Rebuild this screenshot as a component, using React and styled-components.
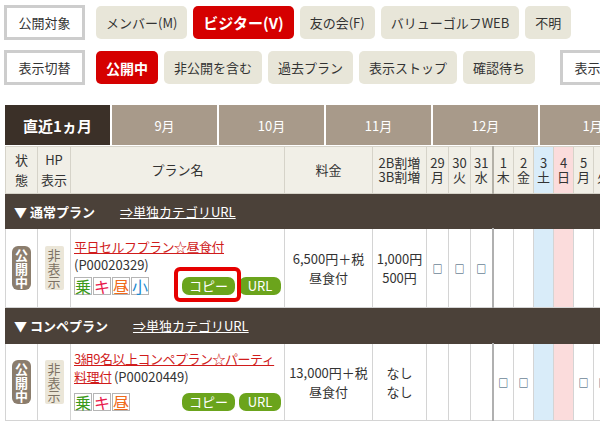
import React from 'react';
import styled, { createGlobalStyle } from 'styled-components';

const GlobalStyle = createGlobalStyle`
  html, body { margin: 0; padding: 0; overflow: hidden; background: #fff; }
  body {
    font-family: "Noto Sans CJK JP", "Noto Sans", sans-serif;
    color: #333;
    font-size: 13px;
  }
  * { box-sizing: border-box; }
`;

const Page = styled.div`
  width: 900px;
  padding: 5px 0 0 4px;
`;

const FilterRow = styled.div`
  display: flex;
  align-items: center;
  gap: 6px;
  height: 35px;
  margin-bottom: 10px;
  white-space: nowrap;
`;

const LabelBox = styled.div`
  flex: 0 0 81px;
  height: 35px;
  border: 3px solid #cdcdcd;
  background: #fff;
  display: flex;
  align-items: center;
  justify-content: center;
  font-size: 13px;
  color: #333;
  margin-right: 5px;
  margin-left: ${(p) => (p.$push ? '19px' : '0')};
`;

const Chip = styled.div`
  height: 33px;
  padding: 0 10px;
  border-radius: 5px;
  display: flex;
  align-items: center;
  background: ${(p) => (p.$active ? '#d50000' : '#e8e6d9')};
  color: ${(p) => (p.$active ? '#fff' : '#333')};
  font-weight: ${(p) => (p.$active ? 700 : 400)};
  font-size: ${(p) => p.$size || 13}px;
`;

const TabRow = styled.div`
  display: flex;
  gap: 2px;
  margin: 20px 0 1px 1px;
`;

const Tab = styled.div`
  flex: 0 0 105px;
  height: 40px;
  display: flex;
  align-items: center;
  justify-content: center;
  background: ${(p) => (p.$active ? '#3b3028' : '#a89a8a')};
  color: #fff;
  font-size: ${(p) => (p.$active ? 15 : 13)}px;
  font-weight: ${(p) => (p.$active ? 700 : 400)};
`;

const Table = styled.table`
  margin-left: 1px;
  border-collapse: collapse;
  table-layout: fixed;
  width: 648px;
`;

const Th = styled.th`
  background: ${(p) => p.$bg || '#f1efe7'};
  border: 1px solid #d6d3c9;
  border-left: ${(p) => (p.$sep ? '2px solid #b4b1a8' : '1px solid #d6d3c9')};
  font-weight: 400;
  font-size: 13px;
  color: #333;
  text-align: center;
  vertical-align: middle;
  line-height: ${(p) => (p.$tight ? '14px' : '20px')};
  padding: 0;
  height: 47px;
`;

const SectionCell = styled.td`
  background: #4b4139;
  color: #fff;
  height: ${(p) => p.$h}px;
  padding: 0 0 0 8px;
  font-size: 13px;
  border: 1px solid #4b4139;
  white-space: nowrap;
`;

const SectionTitle = styled.span`
  font-weight: 700;
`;

const SectionLink = styled.a`
  color: #fff;
  text-decoration: underline;
  margin-left: 25px;
`;

const Td = styled.td`
  border: 1px solid #d4d4d4;
  border-left: ${(p) => (p.$sep ? '2px solid #b0b0b0' : '1px solid #d4d4d4')};
  background: ${(p) => p.$bg || '#fff'};
  text-align: center;
  vertical-align: middle;
  padding: 0;
  line-height: 19px;
  font-size: 13px;
`;

const PlanCell = styled.td`
  border: 1px solid #d4d4d4;
  vertical-align: middle;
  padding: 0 3px 4px 3px;
  text-align: left;
  line-height: 18px;
  font-size: 13px;
`;

const Row = styled.tr`
  height: ${(p) => p.$h}px;
`;

const StatusBadge = styled.span`
  display: inline-block;
  writing-mode: vertical-rl;
  text-orientation: upright;
  width: 19px;
  height: 44px;
  line-height: 19px;
  padding-top: 2px;
  border-radius: ${(p) => (p.$kind === 'pub' ? 6 : 2)}px;
  background: ${(p) => (p.$kind === 'pub' ? '#8b7d6d' : '#ebe6d8')};
  color: ${(p) => (p.$kind === 'pub' ? '#fff' : '#7d7264')};
  font-weight: ${(p) => (p.$kind === 'pub' ? 700 : 400)};
  font-size: 13px;
  letter-spacing: 0.5px;
  vertical-align: middle;
`;

const PlanTitle = styled.div`
  letter-spacing: -0.5px;
`;

const PlanLink = styled.a`
  color: #d01c1c;
  text-decoration: underline;
`;

const Code = styled.span`
  color: #333;
  letter-spacing: 0;
`;

const PlanFoot = styled.div`
  display: flex;
  justify-content: space-between;
  align-items: center;
  margin-top: ${(p) => p.$gap}px;
`;

const Icons = styled.div`
  display: flex;
  gap: 1px;
`;

const IconBox = styled.span`
  width: 18px;
  height: 18px;
  border: 1px solid #b5b5b5;
  display: flex;
  align-items: center;
  justify-content: center;
  font-size: 16px;
  line-height: 16px;
  color: ${(p) => p.$c};
  background: #fff;
`;

const Actions = styled.div`
  display: flex;
  gap: 4px;
  position: relative;
`;

const GreenButton = styled.span`
  display: block;
  width: ${(p) => p.$w}px;
  height: 18px;
  line-height: 18px;
  border-radius: 7px;
  background: #6ba41c;
  color: #fff;
  font-size: 13px;
  text-align: center;
`;

const Highlight = styled.span`
  position: absolute;
  left: -8px;
  top: -10px;
  width: 67px;
  height: 35px;
  border: 4px solid #e60000;
  border-radius: 6px;
  pointer-events: none;
`;

const Mark = styled.span`
  font-size: 10px;
  font-weight: 700;
  color: #1d4a66;
`;

const days = [
  ['29', '月'], ['30', '火'], ['31', '水'], ['1', '木'], ['2', '金'], ['3', '土'],
  ['4', '日'], ['5', '月'], ['6', '火'], ['7', '水'], ['8', '木'],
];

const dayBg = (d) => (d === '土' ? '#d9ecf9' : d === '日' ? '#fbdcdc' : null);
const colWidths = [32, 33, 214, 88, 54, 22, 22, 22, 21, 20, 20, 20, 20, 20, 20, 20];

const iconColors = { 乗: '#3b9a1a', キ: '#e8194b', 昼: '#f06a1a', 小: '#1a8ad0' };

const plans = [
  {
    section: '通常プラン',
    sectionH: 35,
    h: 79,
    title: ['平日セルフプラン☆昼食付'],
    code: '(P00020329)',
    codeOwnLine: true,
    icons: ['乗', 'キ', '昼', '小'],
    price: ['6,500円＋税', '昼食付'],
    extra: ['1,000円', '500円'],
    marks: [0, 1, 2],
    highlight: true,
    gap: 3,
  },
  {
    section: 'コンペプラン',
    sectionH: 36,
    h: 77,
    title: ['3組9名以上コンペプラン☆パーティ', '料理付'],
    code: '(P00020449)',
    codeOwnLine: false,
    icons: ['乗', 'キ', '昼'],
    price: ['13,000円＋税', '昼食付'],
    extra: ['なし', 'なし'],
    marks: [3, 4, 7, 8],
    highlight: false,
    gap: 7,
  },
];

export default function App() {
  return (
    <>
      <GlobalStyle />
      <Page>
        <FilterRow>
          <LabelBox>公開対象</LabelBox>
          <Chip>メンバー(M)</Chip>
          <Chip $active $size={15}>ビジター(V)</Chip>
          <Chip>友の会(F)</Chip>
          <Chip>バリューゴルフWEB</Chip>
          <Chip>不明</Chip>
        </FilterRow>
        <FilterRow>
          <LabelBox>表示切替</LabelBox>
          <Chip $active $size={14}>公開中</Chip>
          <Chip>非公開を含む</Chip>
          <Chip>過去プラン</Chip>
          <Chip>表示ストップ</Chip>
          <Chip>確認待ち</Chip>
          <LabelBox $push>表示件数</LabelBox>
        </FilterRow>

        <TabRow>
          <Tab $active>直近1ヵ月</Tab>
          <Tab>9月</Tab>
          <Tab>10月</Tab>
          <Tab>11月</Tab>
          <Tab>12月</Tab>
          <Tab>1月</Tab>
        </TabRow>

        <Table>
          <colgroup>
            {colWidths.map((w, i) => (
              <col key={i} style={{ width: w }} />
            ))}
          </colgroup>
          <thead>
            <tr>
              <Th>状<br />態</Th>
              <Th>HP<br />表示</Th>
              <Th>プラン名</Th>
              <Th>料金</Th>
              <Th $tight>2B割増<br />3B割増</Th>
              {days.map(([n, d], i) => (
                <Th key={i} $tight $sep={i === 3} $bg={dayBg(d)}>
                  {n}<br />{d}
                </Th>
              ))}
            </tr>
          </thead>
          <tbody>
            {plans.map((p, pi) => (
              <React.Fragment key={pi}>
                <tr>
                  <SectionCell colSpan={colWidths.length} $h={p.sectionH}>
                    <SectionTitle>▼ {p.section}</SectionTitle>
                    <SectionLink>⇒単独カテゴリURL</SectionLink>
                  </SectionCell>
                </tr>
                <Row $h={p.h}>
                  <Td><StatusBadge $kind="pub">公開中</StatusBadge></Td>
                  <Td><StatusBadge $kind="hp">非表示</StatusBadge></Td>
                  <PlanCell>
                    <PlanTitle>
                      <PlanLink>
                        {p.title.map((t, i) => (
                          <React.Fragment key={i}>
                            {i > 0 && <br />}
                            {t}
                          </React.Fragment>
                        ))}
                      </PlanLink>
                      {p.codeOwnLine ? <br /> : ' '}
                      <Code>{p.code}</Code>
                    </PlanTitle>
                    <PlanFoot $gap={p.gap}>
                      <Icons>
                        {p.icons.map((c) => (
                          <IconBox key={c} $c={iconColors[c]}>{c}</IconBox>
                        ))}
                      </Icons>
                      <Actions>
                        <GreenButton $w={53}>コピー</GreenButton>
                        <GreenButton $w={42}>URL</GreenButton>
                        {p.highlight && <Highlight />}
                      </Actions>
                    </PlanFoot>
                  </PlanCell>
                  <Td>{p.price[0]}<br />{p.price[1]}</Td>
                  <Td>{p.extra[0]}<br />{p.extra[1]}</Td>
                  {days.map(([, d], i) => (
                    <Td key={i} $sep={i === 3} $bg={dayBg(d)}>
                      {p.marks.includes(i) ? <Mark>□</Mark> : null}
                    </Td>
                  ))}
                </Row>
              </React.Fragment>
            ))}
          </tbody>
        </Table>
      </Page>
    </>
  );
}
